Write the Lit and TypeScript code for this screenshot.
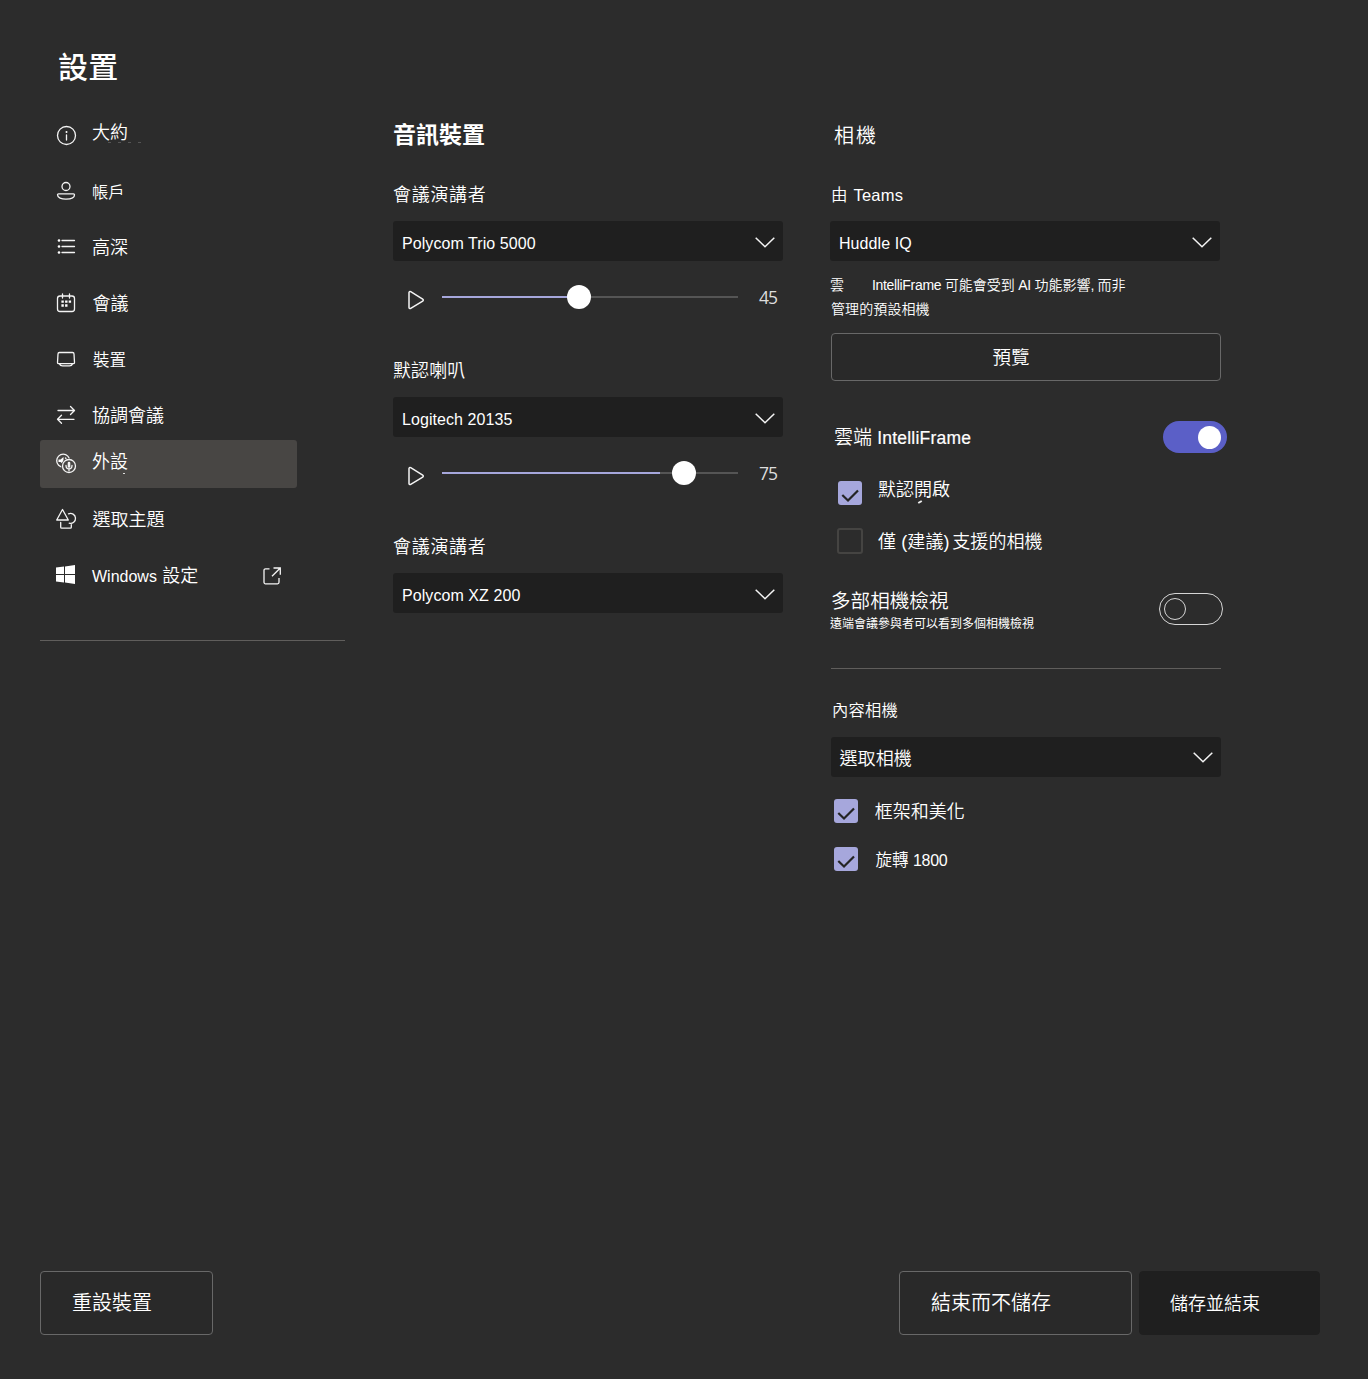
import { LitElement, html, css, svg } from "lit";
import { customElement } from "lit/decorators.js";
import { classMap } from "lit/directives/class-map.js";

const icon = (body: unknown, cls = "") =>
  html`<svg class="ico ${cls}" viewBox="0 0 24 24" width="24" height="24">${body}</svg>`;

const icons: Record<string, unknown> = {
  info: svg`<circle cx="12.5" cy="12.5" r="9"/><path d="M12.5 12v5"/><circle class="solid" cx="12.5" cy="9" r="1"/>`,
  person: svg`<circle cx="12" cy="7.5" r="4"/><path d="M4.5 14.8h15a1 1 0 0 1 1 1c0 3-4 4.400-8.500 4.400s-8.500-1.400-8.500-4.400a1 1 0 0 1 1-1z"/>`,
  list: svg`<path d="M8 5.500h12.500M8 11.500h12.500M8 17.500h12.500"/><circle class="solid" cx="5" cy="5.500" r="1.300"/><circle class="solid" cx="5" cy="11.500" r="1.300"/><circle class="solid" cx="5" cy="17.500" r="1.300"/>`,
  calendar: svg`<rect x="3.500" y="5" width="17" height="15.500" rx="2.500"/><path d="M8.500 3v4M15.500 3v4"/><path class="solid" d="M7.400 9.400h2.400v2.400h-2.400zM11.100 9.400h2.400v2.400h-2.400zM14.700 9.400h2.400v2.400h-2.400zM7.400 13.300h2.400v2.400h-2.400zM11.100 13.300h2.400v2.400h-2.400z"/>`,
  device: svg`<path d="M5.500 5.500h13a1.500 1.500 0 0 1 1.500 1.500l.5 8.500a1.200 1.200 0 0 1-1.200 1.200H4.700a1.200 1.200 0 0 1-1.200-1.200L4 7a1.500 1.500 0 0 1 1.500-1.500zM5.500 17c.5 1.300 1.300 1.800 3 1.800h7c1.700 0 2.500-.5 3-1.800"/>`,
  swap: svg`<path d="M4 7.500h16.300M16.500 3.500l4 4-4 4M20 16.300H3.700M7.500 12.300l-4 4 4 4"/>`,
  peripherals: svg`<circle cx="9.200" cy="8.700" r="6.500"/><path class="solid" d="M4.500 7.500h2l3-2.500v7.500l-3-2.500h-2z"/><path d="M11.500 6l1.500 2"/><circle class="mask" cx="15" cy="14" r="7.800"/><circle cx="15" cy="14" r="6.500"/><path class="heavy" d="M15 11v3.500"/><path d="M12 13.500c0 4.500 6 4.500 6 0M15 17v1.800"/>`,
  shapes: svg`<path d="M8.500 2.500L2.700 13h11.600zM14.500 6.800a5 5 0 1 1 .7 9.400M6.700 15.500v4.700a1 1 0 0 0 1 1h8.600a1 1 0 0 0 1-1v-2.500"/>`,
};

const chevron = html`<svg class="chev" viewBox="0 0 20 11" width="20" height="11"><path d="M.7.700l9.300 9 9.300-9"/></svg>`;
const play = html`<svg class="play" viewBox="0 0 18 20" width="18" height="20"><path d="M2 2.600v14.800c0 1 .8 1.500 1.700 1l12-7.300c.8-.5.8-1.500 0-2l-12-7.400c-.9-.5-1.700-.1-1.700.9z"/></svg>`;

interface NavItem { icon: string; label: string; cls: string; active?: boolean }
const nav: NavItem[] = [
  { icon: "info", label: "大約", cls: "n18 up" },
  { icon: "person", label: "帳戶", cls: "n16" },
  { icon: "list", label: "高深", cls: "n18" },
  { icon: "calendar", label: "會議", cls: "n18 in0" },
  { icon: "device", label: "裝置", cls: "n17 in" },
  { icon: "swap", label: "協調會議", cls: "n18" },
  { icon: "peripherals", label: "外設", cls: "n18 in0 up", active: true },
  { icon: "shapes", label: "選取主題", cls: "n18 in0" },
];

@customElement("app-root")
export class AppRoot extends LitElement {
  static styles = css`
    :host { display: block; }
    * { box-sizing: border-box; }
    .page {
      height: 1379px; background: #2c2c2c; color: #fff; display: flex; flex-direction: column;
      padding: 43px 48px 44px 40px;
      font-family: "Liberation Sans", "Noto Sans CJK TC", sans-serif; font-size: 16px; font-weight: 350;
      white-space: pre; overflow: hidden;
    }
    svg { display: block; fill: none; stroke: #f4f4f4; flex: none; }
    .title { font-size: 30px; font-weight: 500; line-height: 50px; height: 68px; padding-left: 18px; letter-spacing: .3px; }
    .cols { display: flex; flex: 1; }
    .nav { width: 305px; display: flex; flex-direction: column; }
    .item { height: 48px; width: 257px; margin-bottom: 8px; padding: 0 14px; display: flex; align-items: center; border-radius: 3px; line-height: 24px; position: relative; }
    .item > span { padding-top: 2px; }
    .item.before { margin-bottom: 1px; }
    .item.active { background: #484644; margin-bottom: 7px; }
    .item.active::after { content: ""; position: absolute; left: 83px; top: 33px; width: 2px; height: 1px; background: #ddd; }
    .item.first::after { content: ""; position: absolute; left: 68px; top: 31px; width: 34px; height: 1px; background: repeating-linear-gradient(90deg, #555 0 3px, transparent 3px 10px); }
    .ico { stroke-width: 1.3; stroke-linejoin: round; stroke-linecap: round; margin-right: 14px; }
    .ico .solid { fill: #fff; stroke: none; }
    .ico .mask { fill: #484644; stroke: none; }
    .ico .heavy { stroke-width: 2.6; }
    .win { fill: #fff; stroke: none; margin: 0 17px 2px 2px; }
    .n18 { font-size: 18px; } .n17 { font-size: 16.5px; } .n16 { font-size: 16.300px; }
    .in { padding-left: 1px; }
    .in0 { padding-left: .4px; }
    .item > .up { padding: 0 0 4px; }
    .ext { margin: 1px 2px 0 auto; }
    .rule { height: 1px; background: #605e5c; }
    .nav .rule { margin-top: 33px; }
    .audio { width: 390px; margin-left: 48px; }
    .camera { width: 397px; margin-left: 47px; }
    .head { height: 48px; line-height: 48px; margin-bottom: 20px; font-size: 23px; font-weight: 700; }
    .camera .head { font-size: 20px; font-weight: 350; letter-spacing: 2px; padding-left: 4px; line-height: 50px; }
    .label { height: 30px; line-height: 32px; margin-bottom: 12px; font-size: 18px; letter-spacing: .7px; }
    .label.tight { letter-spacing: .1px; }
    .select { width: 390px; height: 40px; padding: 6px 8px 0 9px; background: #1f1f1f; border-radius: 3px; display: flex; align-items: center; justify-content: space-between; line-height: 34px; letter-spacing: .07px; }
    .select.cjk { font-size: 18px; padding: 4px 8px 0 8.500px; }
    .select.cjk span { margin-bottom: 1px; }
    .select.cjk .chev { margin-bottom: 3px; }
    .chev { stroke-width: 1.5; margin-bottom: 4px; }
    .slider { height: 48px; margin: 12px 0 34px; display: flex; align-items: center; padding-left: 14px; }
    .play { stroke-width: 1.5; margin: 6px 17px 0 0; }
    .track { width: 296px; height: 2px; background: #555; position: relative; }
    .fill { height: 2px; background: #a6a7dc; }
    .thumb { position: absolute; top: -11px; width: 24px; height: 24px; margin-left: -12px; border-radius: 50%; background: #fff; }
    .val { margin: 0 0 0 21px; font: 400 17.500px/24px "Open Sans", sans-serif; letter-spacing: -.9px; color: #ddd; }
    .by { font-size: 16.500px; letter-spacing: .2px; padding-left: 1px; line-height: 32px; }
    .by span { padding-left: 1px; }
    .note { height: 50px; margin: 12px 0 10px; font-size: 14px; line-height: 24px; }
    .note .gap { display: inline-block; width: 28px; }
    .note .lat { font-size: 14px; letter-spacing: -.33px; }
    .note .l2 { padding-left: 1px; letter-spacing: .1px; }
    .btn { border: 1px solid #686868; border-radius: 4px; background: #292929; font: inherit; color: #fff; }
    .preview { width: 390px; height: 48px; line-height: 48px; margin-left: 1px; text-align: center; font-size: 18.500px; padding-right: 30px; }
    .row { display: flex; align-items: center; position: relative; }
    .toggle { width: 64px; height: 32px; border-radius: 16px; margin-left: auto; display: flex; align-items: center; padding: 0 6px; }
    .toggle.on { background: #5b5fc7; justify-content: flex-end; }
    .toggle.on i { width: 23px; height: 23px; background: #fff; border-radius: 50%; }
    .toggle.off { border: 1px solid #d6d6d6; padding: 0 4px; margin-right: 4px; }
    .toggle.off i { width: 22px; height: 22px; border: 1px solid #d6d6d6; border-radius: 50%; }
    .intelli { margin-top: 40px; height: 32px; padding-left: 4px; font-size: 19px; line-height: 30px; }
    .intelli > span:first-child { padding-top: 2px; }
    .intelli b { font-size: 17.500px; font-weight: 400; letter-spacing: .2px; -webkit-text-stroke: .2px #fff; }
    .check { height: 24px; font-size: 18px; line-height: 24px; }
    .check .txt { padding-top: 2px; }
    .box { width: 24px; height: 24px; border-radius: 3px; background: #a6a7dc; margin-right: 16px; flex: none; }
    .box svg { stroke: #242424; stroke-width: 2.200; }
    .box.empty { width: 26px; height: 26px; background: none; border: 2px solid #454442; margin: 0 15px 0 -1px; }
    .c1 { margin-top: 28px; padding-left: 8px; }
    .c1 .txt { padding: 0 0 6px; }
    .c1::after { content: ""; position: absolute; left: 87.500px; top: 20px; width: 4px; height: 2px; background: #eee; transform: rotate(-30deg); }
    .c2 { margin-top: 24px; padding-left: 8px; letter-spacing: .1px; }
    .check.c2 .txt { padding-top: 4px; }
    .c2 .nar { font-size: 9px; }
    .multi { height: 46px; margin-top: 32px; align-items: flex-start; }
    .multi .toggle { margin-top: 8px; }
    .big { font-size: 19.600px; line-height: 30px; padding: 1px 0 0 1px; }
    .small { font-size: 12px; line-height: 16px; font-weight: 400; }
    .camera > .rule { margin: 37px 0 26px 1px; width: 390px; }
    .content { font-size: 16.300px; margin-bottom: 12px; letter-spacing: .2px; padding-left: 2px; line-height: 30px; }
    .camera .off1 { margin-left: 1px; }
    .c3 { margin-top: 22px; padding-left: 4px; }
    .c3 .txt, .c4 .txt { padding-left: .7px; }
    .c4 { margin-top: 24px; padding-left: 4px; }
    .c4 .txt { font-size: 16.500px; padding-left: 1.400px; }
    .c4 .nar { font-size: 16px; letter-spacing: -.3px; }
    .footer { display: flex; height: 64px; }
    .act { height: 64px; line-height: 63px; padding-left: 31px; font-size: 20px; }
    .reset { width: 173px; margin-right: auto; }
    .exit { width: 233px; margin-right: 7px; }
    .save { width: 181px; background: #1f1f1f; border-color: #1f1f1f; font-size: 18px; padding-left: 30px; line-height: 64px; }
  `;

  private select(text: string, cls = "") {
    return html`<div class="select ${cls}"><span>${text}</span>${chevron}</div>`;
  }

  private slider(value: number, fill: number, thumb: number) {
    return html`<div class="slider">${play}<div class="track"><div class="fill" style="width:${fill}px"></div><div class="thumb" style="left:${thumb}px"></div></div><span class="val">${value}</span></div>`;
  }

  private check(text: unknown, cls: string, on = true) {
    return html`<div class="row check ${cls}"><span class="box ${on ? "" : "empty"}">${on
      ? html`<svg viewBox="0 0 24 24" width="24" height="24"><path d="M4.300 14l5.700 5.500L20 9.500"/></svg>` : ""}</span><span class="txt">${text}</span></div>`;
  }

  render() {
    return html`<div class="page"><div class="title">設置</div><div class="cols"><div class="nav">${nav.map((n, i) =>
      html`<div class=${classMap({ item: true, first: i === 0, active: !!n.active, before: !!nav[i + 1]?.active })}>${icon(icons[n.icon])}<span class=${n.cls}>${n.label}</span></div>`)}<div class="item"><svg class="win" viewBox="0 0 19 19" width="19" height="19"><path d="M0 2.600L8 1.500V9H0zM9 1.400L19 0v9H9zM0 10h8v7.500l-8-1.100zM9 10h10v9L9 17.600z"/></svg><span>Windows <span class="n18 in">設定</span></span><svg class="ext" viewBox="0 0 18 18" width="18" height="18" stroke-width="1.300"><path d="M6.500 1.800H2.500a1.500 1.500 0 0 0-1.500 1.500v12a1.500 1.500 0 0 0 1.500 1.500h12a1.500 1.500 0 0 0 1.500-1.500V11M10.500 1h6.800v6.800M17.300 1L9 9.300"/></svg></div><div class="rule"></div></div><div class="audio"><div class="head">音訊裝置</div><div class="label">會議演講者</div>${this.select("Polycom Trio 5000")}${this.slider(45, 136, 137)}<div class="label tight">默認喇叭</div>${this.select("Logitech 20135")}${this.slider(75, 218, 242)}<div class="label">會議演講者</div>${this.select("Polycom XZ 200")}</div><div class="camera"><div class="head">相機</div><div class="label by">由 <span>Teams</span></div>${this.select("Huddle IQ")}<div class="note">雲<span class="gap"></span><span class="lat">IntelliFrame </span>可能會受到<span class="lat"> AI </span>功能影響<span class="lat">, </span>而非<br><span class="l2">管理的預設相機</span></div><div class="btn preview">預覽</div><div class="row intelli"><span>雲端 <b>IntelliFrame</b></span><span class="toggle on"><i></i></span></div>${this.check("默認開啟", "c1")}${this.check(html`僅 (建議)<span class="nar"> </span>支援的相機`, "c2", false)}<div class="row multi"><div><div class="big">多部相機檢視</div><div class="small">遠端會議參與者可以看到多個相機檢視</div></div><span class="toggle off"><i></i></span></div><div class="rule"></div><div class="label content">內容相機</div>${this.select("選取相機", "cjk off1")}${this.check("框架和美化", "c3")}${this.check(html`旋轉 <span class="nar">1800</span>`, "c4")}</div></div><div class="footer"><div class="btn act reset">重設裝置</div><div class="btn act exit">結束而不儲存</div><div class="btn act save">儲存並結束</div></div></div>`;
  }
}
